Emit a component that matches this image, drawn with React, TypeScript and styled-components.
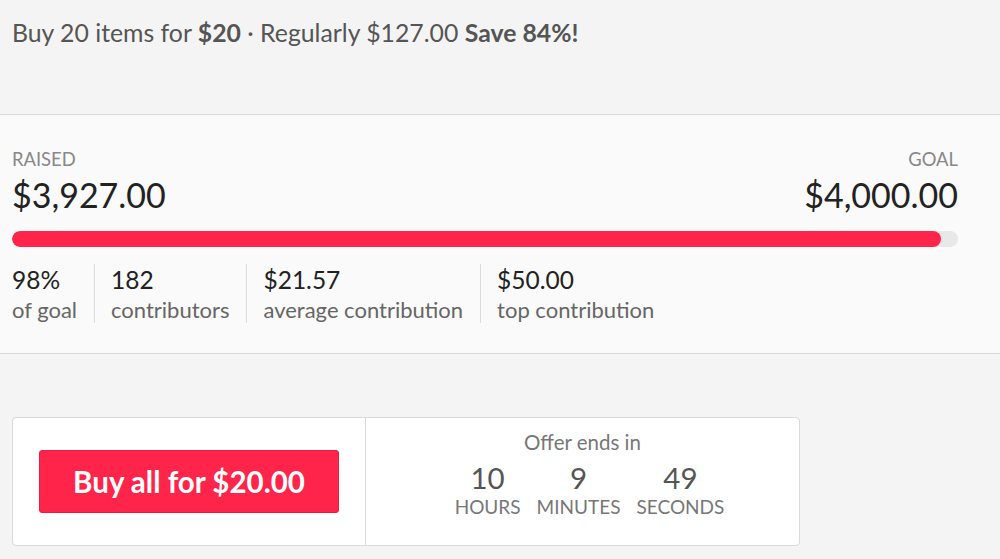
import React from 'react';
import styled, { createGlobalStyle } from 'styled-components';

const GlobalStyle = createGlobalStyle`
  html, body {
    margin: 0;
    padding: 0;
    background-color: #f4f4f4;
    font-family: Lato, "Noto Sans", "Liberation Sans", sans-serif;
  }
  * { box-sizing: border-box; }
`;

const Page = styled.div`
  width: 1000px;
  height: 559px;
  overflow: hidden;
  background-color: #f4f4f4;
`;

const Header = styled.div`
  height: 115px;
  padding: 18px 12px 0;
  border-bottom: 1px solid #dadada;
  font-size: 24.8px;
  color: #555;
`;

const Strong = styled.b`
  font-weight: 700;
`;

const StatsPanel = styled.div`
  height: 239px;
  background-color: #fafafa;
  border-bottom: 1px solid #dadada;
  padding: 34px 42px 0 12px;
`;

const AmountRow = styled.div`
  display: flex;
  justify-content: space-between;
`;

const AmountBlock = styled.div<{ align?: 'left' | 'right' }>`
  display: flex;
  flex-direction: column;
  align-items: ${p => (p.align === 'right' ? 'flex-end' : 'flex-start')};
`;

const SmallLabel = styled.div`
  font-size: 18.4px;
  color: #888;
  line-height: 20px;
`;

const BigAmount = styled.div`
  font-size: 34px;
  color: #222;
  line-height: 48px;
  margin-top: 2px;
`;

const Track = styled.div`
  margin-top: 12px;
  height: 16px;
  border-radius: 8px;
  background-color: #e8e8e8;
  overflow: hidden;
`;

const Fill = styled.div`
  height: 100%;
  border-radius: 8px;
  background-color: #ff2449;
`;

const Metrics = styled.div`
  display: flex;
  margin-top: 17px;
`;

const Metric = styled.div`
  padding: 0 17px 0 16px;
  border-left: 1px solid #dcdcdc;

  &:first-child {
    padding-left: 0;
    border-left: none;
  }
`;

const MetricValue = styled.div`
  font-size: 24.5px;
  color: #222;
  line-height: 32px;
`;

const MetricLabel = styled.div`
  font-size: 22px;
  color: #666;
  line-height: 27px;
`;

const Bottom = styled.div`
  padding: 63px 12px 0;
`;

const Card = styled.div`
  width: 788px;
  height: 129px;
  display: flex;
  background-color: #fff;
  border: 1px solid #dadada;
  border-radius: 4px;
`;

const BuyCell = styled.div`
  width: 353px;
  display: flex;
  align-items: center;
  padding-left: 26px;
  border-right: 1px solid #dadada;
`;

const BuyButton = styled.button`
  width: 300px;
  height: 63px;
  border: 1px solid #e81d3f;
  border-radius: 3px;
  background-color: #ff2449;
  color: #fff;
  font-family: Lato, "Noto Sans", "Liberation Sans", sans-serif;
  font-weight: 700;
  font-size: 29.5px;
  cursor: pointer;
`;

const TimerCell = styled.div`
  flex: 1;
  display: flex;
  flex-direction: column;
  align-items: center;
  padding-top: 11px;
`;

const TimerTitle = styled.div`
  font-size: 20.5px;
  color: #777;
  line-height: 26px;
`;

const Units = styled.div`
  display: flex;
  gap: 16px;
  margin-top: 7px;
  padding-left: 14px;
`;

const Unit = styled.div`
  display: flex;
  flex-direction: column;
  align-items: center;
`;

const UnitValue = styled.div`
  font-size: 29.5px;
  color: #555;
  line-height: 32px;
`;

const UnitLabel = styled.div`
  font-size: 19px;
  color: #777;
  line-height: 26px;
`;

const metrics = [
  { value: '98%', label: 'of goal' },
  { value: '182', label: 'contributors' },
  { value: '$21.57', label: 'average contribution' },
  { value: '$50.00', label: 'top contribution' },
];

const countdown = [
  { value: '10', label: 'HOURS' },
  { value: '9', label: 'MINUTES' },
  { value: '49', label: 'SECONDS' },
];

const raised = 3927;
const goal = 4000;

export default function App() {
  const pct = Math.min(100, (raised / goal) * 100);
  return (
    <Page>
      <GlobalStyle />
      <Header>
        Buy 20 items for <Strong>$20</Strong> · Regularly $127.00 <Strong>Save 84%!</Strong>
      </Header>
      <StatsPanel>
        <AmountRow>
          <AmountBlock>
            <SmallLabel>RAISED</SmallLabel>
            <BigAmount>$3,927.00</BigAmount>
          </AmountBlock>
          <AmountBlock align="right">
            <SmallLabel>GOAL</SmallLabel>
            <BigAmount>$4,000.00</BigAmount>
          </AmountBlock>
        </AmountRow>
        <Track>
          <Fill style={{ width: `${pct}%` }} />
        </Track>
        <Metrics>
          {metrics.map(m => (
            <Metric key={m.label}>
              <MetricValue>{m.value}</MetricValue>
              <MetricLabel>{m.label}</MetricLabel>
            </Metric>
          ))}
        </Metrics>
      </StatsPanel>
      <Bottom>
        <Card>
          <BuyCell>
            <BuyButton>Buy all for $20.00</BuyButton>
          </BuyCell>
          <TimerCell>
            <TimerTitle>Offer ends in</TimerTitle>
            <Units>
              {countdown.map(u => (
                <Unit key={u.label}>
                  <UnitValue>{u.value}</UnitValue>
                  <UnitLabel>{u.label}</UnitLabel>
                </Unit>
              ))}
            </Units>
          </TimerCell>
        </Card>
      </Bottom>
    </Page>
  );
}
